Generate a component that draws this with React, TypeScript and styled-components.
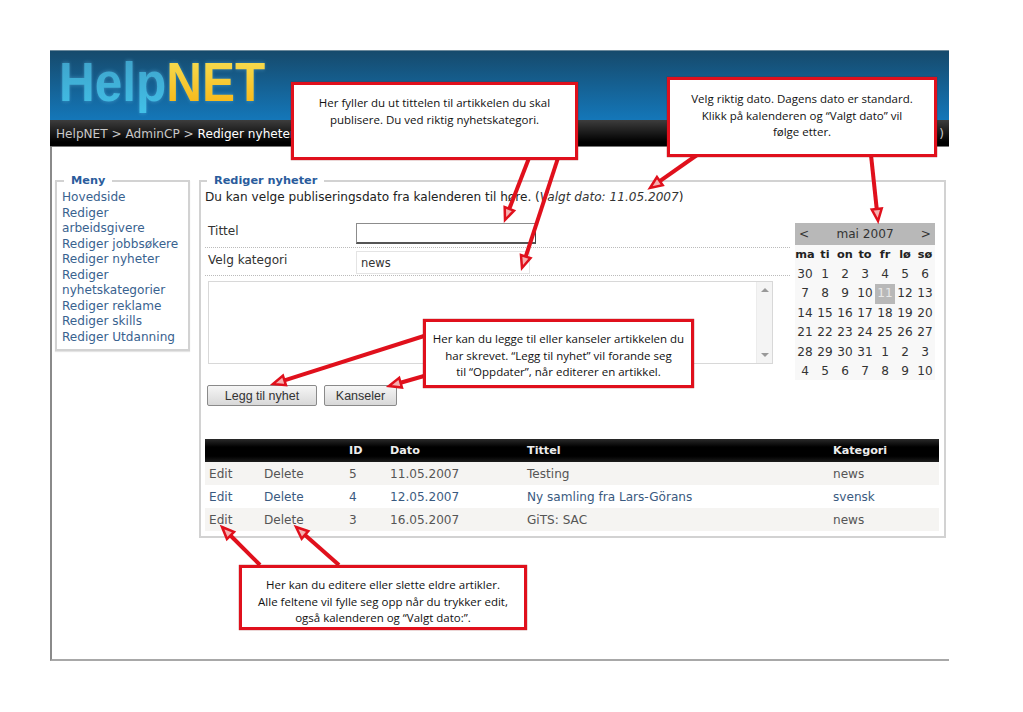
import styled, { createGlobalStyle } from 'styled-components';

const GlobalStyle = createGlobalStyle`
    html, body {
        margin: 0;
        padding: 0;
        background: #fff;
    }
    body {
        font-family: 'DejaVu Sans', Verdana, sans-serif;
        font-size: 12.1px;
        color: #333;
    }
`;

const Page = styled.div`
    position: relative;
    width: 1023px;
    height: 712px;
    overflow: hidden;
    padding: 50px 0 0 50px;
    box-sizing: border-box;
`;

const Frame = styled.div`
    width: 899px;
    height: 611px;
    box-sizing: border-box;
    border-left: 2px solid #8a8a8a;
    border-bottom: 2px solid #a8a8a8;
`;

const Banner = styled.div`
    margin-left: -2px;
    height: 70px;
    box-sizing: border-box;
    border-top: 1px solid #6d8a9c;
    padding: 0 0 0 9px;
    background: linear-gradient(#164a6c, #1477b9);
`;

const Logo = styled.div`
    font-family: 'Liberation Sans', Arial, sans-serif;
    font-size: 55px;
    line-height: 62px;
    font-weight: 700;
    transform: scaleX(0.9);
    transform-origin: left;
    filter: drop-shadow(0 0 2px rgba(110, 200, 240, 0.45));
    span {
        background-clip: text;
        -webkit-background-clip: text;
        color: transparent;
    }
`;

const LogoHelp = styled.span`
    background-image: linear-gradient(#3f9fc6, #41c0e8);
`;

const LogoNet = styled.span`
    background-image: linear-gradient(#f5e25a, #f9b10e);
`;

const NavBar = styled.div`
    margin-left: -2px;
    height: 27px;
    box-sizing: border-box;
    display: flex;
    justify-content: space-between;
    align-items: center;
    padding: 2px 5px 0 6px;
    background: linear-gradient(#3d3d3d, #000 85%);
    border-bottom: 1px solid #777;
    color: #c8c8c8;
`;

const Crumb = styled.span`
    b {
        font-weight: 400;
        color: #fff;
    }
`;

const Content = styled.div`
    display: flex;
    align-items: flex-start;
    gap: 9px;
    padding: 26px 0 0 3px;
`;

const Box = styled.fieldset`
    margin: 0;
    box-sizing: border-box;
    border: 2px solid #d2d2d2;
    min-width: 0;
`;

const SideBox = styled(Box)`
    width: 135px;
    height: 178px;
    padding: 2px 5px 0;
    box-shadow: 0 1px 1px #e4e4e4;
`;

const MainBox = styled(Box)`
    width: 747px;
    height: 365px;
    padding: 0 4px;
`;

const BoxTitle = styled.legend`
    margin-left: 2px;
    padding: 0 7px;
    font-size: 11.3px;
    font-weight: 700;
    color: #2a5c9c;
    line-height: 15px;
`;

const MenuLink = styled.a`
    display: block;
    line-height: 15.5px;
    color: #39628f;
`;

const Intro = styled.div`
    margin-top: 2px;
    line-height: 15px;
    height: 15px;
    color: #222;
    em {
        color: #333;
    }
`;

const Columns = styled.div`
    display: flex;
    margin-top: 14px;
`;

const FormColumn = styled.div`
    width: 590px;
`;

const FormRow = styled.div<{ $height: number }>`
    display: flex;
    align-items: center;
    padding-left: 3px;
    width: 585px;
    height: ${(p) => p.$height}px;
    box-sizing: border-box;
    border-bottom: 1px dotted #bbb;
`;

const RowLabel = styled.label`
    width: 148px;
    flex: none;
    margin-bottom: 4px;
    color: #333;
`;

const TitleInput = styled.div`
    width: 180px;
    height: 21px;
    box-sizing: border-box;
    background: #fff;
    border: 1px solid #8c8c8c;
    border-bottom: 2px solid #555;
    border-right-color: #444;
`;

const CategorySelect = styled.div`
    position: relative;
    width: 174px;
    height: 23px;
    box-sizing: border-box;
    margin-top: 1px;
    padding-left: 4px;
    border: 1px solid #e4e4e4;
    line-height: 22px;
    font-size: 11.5px;
    color: #333;
    &::after {
        content: '';
        position: absolute;
        right: 2px;
        top: 10px;
        border: 3px solid transparent;
        border-top: 4px solid #111;
        border-bottom: 0;
    }
`;

const TextArea = styled.div`
    display: flex;
    justify-content: flex-end;
    margin: 5px 0 0 3px;
    width: 565px;
    height: 83px;
    box-sizing: border-box;
    border: 1px solid #d8d8d8;
`;

const ScrollBar = styled.div`
    width: 16px;
    display: flex;
    flex-direction: column;
    justify-content: space-between;
    align-items: center;
    padding: 6px 0;
    box-sizing: border-box;
    background: #f4f4f4;
    border-left: 1px solid #ececec;
`;

const ScrollArrow = styled.span<{ $down?: boolean }>`
    border: 4px solid transparent;
    ${(p) => (p.$down ? 'border-top: 4px solid #999; border-bottom: 0;' : 'border-bottom: 4px solid #999; border-top: 0;')}
`;

const Buttons = styled.div`
    display: flex;
    gap: 7px;
    margin: 21px 0 0 2px;
`;

const Button = styled.button<{ $width: number }>`
    width: ${(p) => p.$width}px;
    height: 21px;
    padding: 0;
    border: 1px solid #8a8a8a;
    border-radius: 2px;
    background: linear-gradient(#f6f6f6, #d8d8d8);
    font-family: 'Liberation Sans', Arial, sans-serif;
    font-size: 12.5px;
    color: #333;
`;

const Calendar = styled.div`
    width: 140px;
    height: 157px;
    margin-top: 4px;
    background: #f8f8f8;
    color: #333;
`;

const CalendarHead = styled.div`
    display: flex;
    justify-content: space-between;
    align-items: center;
    height: 22px;
    padding: 0 4px;
    background: #b8b8b8;
`;

const CalendarGrid = styled.div`
    display: grid;
    grid-template-columns: repeat(7, 20px);
    grid-auto-rows: 19.5px;
    text-align: center;
    line-height: 19px;
`;

const DayName = styled.div`
    font-size: 11.3px;
    font-weight: 700;
    color: #222;
`;

const Day = styled.div<{ $selected?: boolean }>`
    ${(p) => (p.$selected ? 'background: #b8b8b8; color: #e8e8e8;' : '')}
`;

const ArticleTable = styled.table`
    width: 734px;
    margin-top: 33px;
    table-layout: fixed;
    border-collapse: collapse;
    th {
        height: 23px;
        padding: 0;
        text-align: left;
        font-size: 11.2px;
        color: #eee;
        font-weight: 700;
        background: linear-gradient(#2a2a2a, #000 35%, #000 75%, #1c1c1c);
    }
    td {
        height: 23px;
        padding: 0;
    }
    td:first-child {
        padding-left: 4px;
    }
`;

const Row = styled.tr<{ $shaded: boolean }>`
    background: ${(p) => (p.$shaded ? '#f5f4f2' : '#fff')};
    color: ${(p) => (p.$shaded ? '#555' : '#3a5a80')};
`;

const Callout = styled.div<{ $left: number; $top: number; $width: number; $height: number; $pad: number }>`
    position: absolute;
    left: ${(p) => p.$left}px;
    top: ${(p) => p.$top}px;
    width: ${(p) => p.$width}px;
    height: ${(p) => p.$height}px;
    box-sizing: border-box;
    padding: ${(p) => p.$pad}px 4px 0;
    background: #fff;
    border: 3px solid #e0101c;
    box-shadow: 0 0 1px #8a1010;
    font-family: 'Open Sans', 'Noto Sans', sans-serif;
    font-size: 11.5px;
    line-height: 16.5px;
    text-align: center;
    white-space: nowrap;
    color: #111;
`;

const ArrowLayer = styled.svg`
    position: absolute;
    left: 0;
    top: 0;
    pointer-events: none;
`;

const menu = [
    'Hovedside',
    'Rediger arbeidsgivere',
    'Rediger jobbsøkere',
    'Rediger nyheter',
    'Rediger nyhetskategorier',
    'Rediger reklame',
    'Rediger skills',
    'Rediger Utdanning',
];

const dayNames = ['ma', 'ti', 'on', 'to', 'fr', 'lø', 'sø'];

const days = [
    30, 1, 2, 3, 4, 5, 6, 7, 8, 9, 10, 11, 12, 13, 14, 15, 16, 17, 18, 19, 20, 21, 22, 23, 24, 25, 26, 27, 28, 29, 30,
    31, 1, 2, 3, 4, 5, 6, 7, 8, 9, 10,
];

const articles = [
    { id: 5, date: '11.05.2007', title: 'Testing', category: 'news' },
    { id: 4, date: '12.05.2007', title: 'Ny samling fra Lars-Görans', category: 'svensk' },
    { id: 3, date: '16.05.2007', title: 'GiTS: SAC', category: 'news' },
];

const arrows = [
    [529, 158, 505, 220],
    [558, 158, 522, 268],
    [697, 155, 650, 188],
    [871, 155, 878, 221],
    [424, 336, 273, 384],
    [424, 376, 389, 386],
    [260, 565, 222, 527],
    [339, 565, 296, 527],
];

function Arrow({ line }: { line: number[] }) {
    const [x1, y1, x2, y2] = line;
    const len = Math.hypot(x2 - x1, y2 - y1);
    const ux = (x2 - x1) / len;
    const uy = (y2 - y1) / len;
    const bx = x2 - ux * 12;
    const by = y2 - uy * 12;
    const head = `${x2},${y2} ${bx - uy * 5},${by + ux * 5} ${bx + uy * 5},${by - ux * 5}`;
    return (
        <g>
            <line x1={x1} y1={y1} x2={bx} y2={by} stroke="#e0101c" strokeWidth={4} />
            <polygon points={head} fill="#f6b0b0" stroke="#e0101c" strokeWidth={2.5} />
        </g>
    );
}

export default function App() {
    return (
        <>
            <GlobalStyle />
            <Page>
                <Frame>
                    <Banner>
                        <Logo>
                            <LogoHelp>Help</LogoHelp>
                            <LogoNet>NET</LogoNet>
                        </Logo>
                    </Banner>
                    <NavBar>
                        <Crumb>
                            HelpNET &gt; AdminCP &gt; <b>Rediger nyheter</b>
                        </Crumb>
                        <Crumb>)</Crumb>
                    </NavBar>
                    <Content>
                        <SideBox>
                            <BoxTitle>Meny</BoxTitle>
                            {menu.map((item) => (
                                <MenuLink key={item}>{item}</MenuLink>
                            ))}
                        </SideBox>
                        <MainBox>
                            <BoxTitle>Rediger nyheter</BoxTitle>
                            <Intro>
                                Du kan velge publiseringsdato fra kalenderen til høre. (<em>Valgt dato: 11.05.2007</em>)
                            </Intro>
                            <Columns>
                                <FormColumn>
                                    <FormRow $height={29}>
                                        <RowLabel>Tittel</RowLabel>
                                        <TitleInput />
                                    </FormRow>
                                    <FormRow $height={28}>
                                        <RowLabel>Velg kategori</RowLabel>
                                        <CategorySelect>news</CategorySelect>
                                    </FormRow>
                                    <TextArea>
                                        <ScrollBar>
                                            <ScrollArrow />
                                            <ScrollArrow $down />
                                        </ScrollBar>
                                    </TextArea>
                                    <Buttons>
                                        <Button $width={110}>Legg til nyhet</Button>
                                        <Button $width={73}>Kanseler</Button>
                                    </Buttons>
                                </FormColumn>
                                <Calendar>
                                    <CalendarHead>
                                        <span>&lt;</span>
                                        <span>mai 2007</span>
                                        <span>&gt;</span>
                                    </CalendarHead>
                                    <CalendarGrid>
                                        {dayNames.map((name) => (
                                            <DayName key={name}>{name}</DayName>
                                        ))}
                                        {days.map((day, i) => (
                                            <Day key={i} $selected={i === 11}>
                                                {day}
                                            </Day>
                                        ))}
                                    </CalendarGrid>
                                </Calendar>
                            </Columns>
                            <ArticleTable>
                                <colgroup>
                                    <col width={59} />
                                    <col width={85} />
                                    <col width={41} />
                                    <col width={137} />
                                    <col width={306} />
                                    <col width={106} />
                                </colgroup>
                                <thead>
                                    <tr>
                                        <th />
                                        <th />
                                        <th>ID</th>
                                        <th>Dato</th>
                                        <th>Tittel</th>
                                        <th>Kategori</th>
                                    </tr>
                                </thead>
                                <tbody>
                                    {articles.map((a, i) => (
                                        <Row key={a.id} $shaded={i !== 1}>
                                            <td>Edit</td>
                                            <td>Delete</td>
                                            <td>{a.id}</td>
                                            <td>{a.date}</td>
                                            <td>{a.title}</td>
                                            <td>{a.category}</td>
                                        </Row>
                                    ))}
                                </tbody>
                            </ArticleTable>
                        </MainBox>
                    </Content>
                </Frame>
                <ArrowLayer width={1023} height={712}>
                    {arrows.map((line) => (
                        <Arrow key={line.join()} line={line} />
                    ))}
                </ArrowLayer>
                <Callout $left={291} $top={82} $width={287} $height={78} $pad={10}>
                    Her fyller du ut tittelen til artikkelen du skal
                    <br />
                    publisere. Du ved riktig nyhetskategori.
                </Callout>
                <Callout $left={667} $top={77} $width={270} $height={80} $pad={11}>
                    Velg riktig dato. Dagens dato er standard.
                    <br />
                    Klikk på kalenderen og “Valgt dato” vil
                    <br />
                    følge etter.
                </Callout>
                <Callout $left={423} $top={319} $width={271} $height={69} $pad={9}>
                    Her kan du legge til eller kanseler artikkelen du
                    <br />
                    har skrevet. “Legg til nyhet” vil forande seg
                    <br />
                    til “Oppdater”, når editerer en artikkel.
                </Callout>
                <Callout $left={239} $top={565} $width={288} $height={65} $pad={9}>
                    Her kan du editere eller slette eldre artikler.
                    <br />
                    Alle feltene vil fylle seg opp når du trykker edit,
                    <br />
                    også kalenderen og “Valgt dato:”.
                </Callout>
            </Page>
        </>
    );
}
